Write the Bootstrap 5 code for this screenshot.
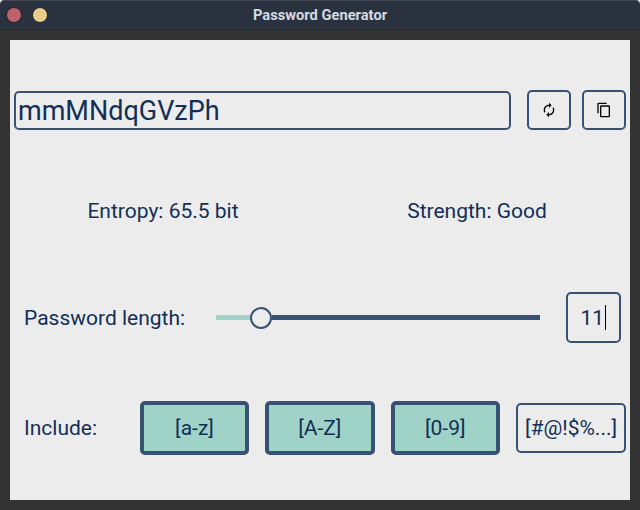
<!DOCTYPE html>
<html lang="en">
<head>
<meta charset="utf-8">
<meta name="viewport" content="width=device-width, initial-scale=1">
<title>Password Generator</title>
<link href="https://cdn.jsdelivr.net/npm/bootstrap@5.3.0/dist/css/bootstrap.min.css" rel="stylesheet">
<style>
  :root { --line: #375272; --ink: #122f55; --mint: #9fd3c7; --panel: #ececec; }
  html { background: #e4e6e8; }
  body { width: 640px; height: 510px; background: #333; color: var(--ink); font-family: Roboto, sans-serif; font-size: 21px; line-height: 25px; border-radius: 5px 5px 0 0; overflow: hidden; }
  .titlebar { height: 30px; background: #2b323f; border-top: 1px solid #434a56; border-bottom: 1px solid #272b33; padding: 0 6px; font-size: 14.7px; font-weight: 700; line-height: 28px; color: #d3dae3; }
  .dot { width: 16px; height: 16px; border-radius: 50%; border: 1px solid #20242d; }
  .dot-close { background: #bf616a; }
  .dot-min { background: #ebcb8b; }
  .side { width: 80px; gap: 10px; }
  .panel { height: 460px; margin: 10px 10px 0; background: var(--panel); padding-top: 50px; }
  .outlined { border: 2px solid var(--line); border-radius: 5px; background: var(--panel); color: var(--ink); }
  .pw-row { height: 40px; padding: 0 4px; }
  .pw-field { width: 497px; height: 39px; padding: 0 2px; font-size: 27px; line-height: 37px; }
  .icon-group { gap: 11px; }
  .icon-btn { width: 44px; height: 40px; padding: 0; color: #000; }
  .info-row { height: 25px; margin-top: 69px; }
  .info-row > div { width: 306px; }
  .len-row { height: 51px; margin-top: 68px; padding: 0 9px 0 14px; }
  .len-label { width: 192px; padding-top: 2px; }
  .slide { width: 324px; height: 22px; margin-right: 26px; }
  .track-on { width: 34px; height: 5px; background: var(--mint); }
  .track-off { height: 5px; background: var(--line); }
  .knob { width: 22px; height: 22px; border: 2px solid var(--line); border-radius: 50%; background: var(--panel); }
  .len-box { width: 55px; height: 51px; padding-right: 13px; }
  .len-value { padding: 2px 1px 0 0; }
  .caret { width: 1px; height: 25px; background: #000; }
  .inc-row { height: 54px; margin-top: 58px; padding: 0 4px 0 14px; }
  .inc-label { width: 116px; }
  .toggle { width: 109.5px; height: 54px; border: 4px solid var(--line); border-radius: 5px; background: var(--mint); color: var(--ink); font-size: 21px; line-height: 25px; padding: 0; }
  .toggle:first-child { width: 109px; }
  .toggle.off { width: 110px; height: 50px; border-width: 2px; background: var(--panel); }
</style>
<script src="https://cdn.jsdelivr.net/npm/bootstrap@5.3.0/dist/js/bootstrap.bundle.min.js"></script>
</head>
<body>
<header class="titlebar d-flex align-items-center justify-content-between">
  <div class="side d-flex"><span class="dot dot-close"></span><span class="dot dot-min"></span></div>
  <span>Password Generator</span>
  <div class="side"></div>
</header>
<main class="panel">
  <div class="pw-row d-flex align-items-end justify-content-between">
    <div class="pw-field outlined">mmMNdqGVzPh</div>
    <div class="icon-group d-flex">
      <button class="icon-btn outlined d-flex align-items-center justify-content-center" aria-label="Regenerate">
        <svg width="16" height="16" viewBox="0 0 24 24" fill="currentColor"><path d="M12 6v3l4-4-4-4v3c-4.42 0-8 3.58-8 8 0 1.57.46 3.03 1.24 4.26L6.700 14.800A5.870 5.870 0 0 1 6 12c0-3.310 2.690-6 6-6zm6.760 1.740L17.300 9.200c.440.840.700 1.790.700 2.800 0 3.310-2.690 6-6 6v-3l-4 4 4 4v-3c4.420 0 8-3.580 8-8 0-1.570-.460-3.030-1.240-4.260z"/></svg>
      </button>
      <button class="icon-btn outlined d-flex align-items-center justify-content-center" aria-label="Copy">
        <svg width="16" height="16" viewBox="0 0 24 24" fill="currentColor"><path d="M16 1H4a2 2 0 0 0-2 2v14h2V3h12V1zm3 4H8a2 2 0 0 0-2 2v14c0 1.100.9 2 2 2h11a2 2 0 0 0 2-2V7a2 2 0 0 0-2-2zm0 16H8V7h11v14z"/></svg>
      </button>
    </div>
  </div>
  <div class="info-row d-flex justify-content-between text-center">
    <div>Entropy: 65.5 bit</div>
    <div>Strength: Good</div>
  </div>
  <div class="len-row d-flex align-items-center">
    <div class="len-label">Password length:</div>
    <div class="slide d-flex align-items-center">
      <div class="track-on"></div><div class="knob"></div><div class="track-off flex-grow-1"></div>
    </div>
    <div class="len-box outlined d-flex align-items-center justify-content-end"><span class="len-value">11</span><span class="caret"></span></div>
  </div>
  <div class="inc-row d-flex align-items-center">
    <div class="inc-label">Include:</div>
    <div class="d-flex align-items-center justify-content-between flex-grow-1">
      <button class="toggle">[a-z]</button>
      <button class="toggle">[A-Z]</button>
      <button class="toggle">[0-9]</button>
      <button class="toggle off">[#@!$%...]</button>
    </div>
  </div>
</main>
</body>
</html>
